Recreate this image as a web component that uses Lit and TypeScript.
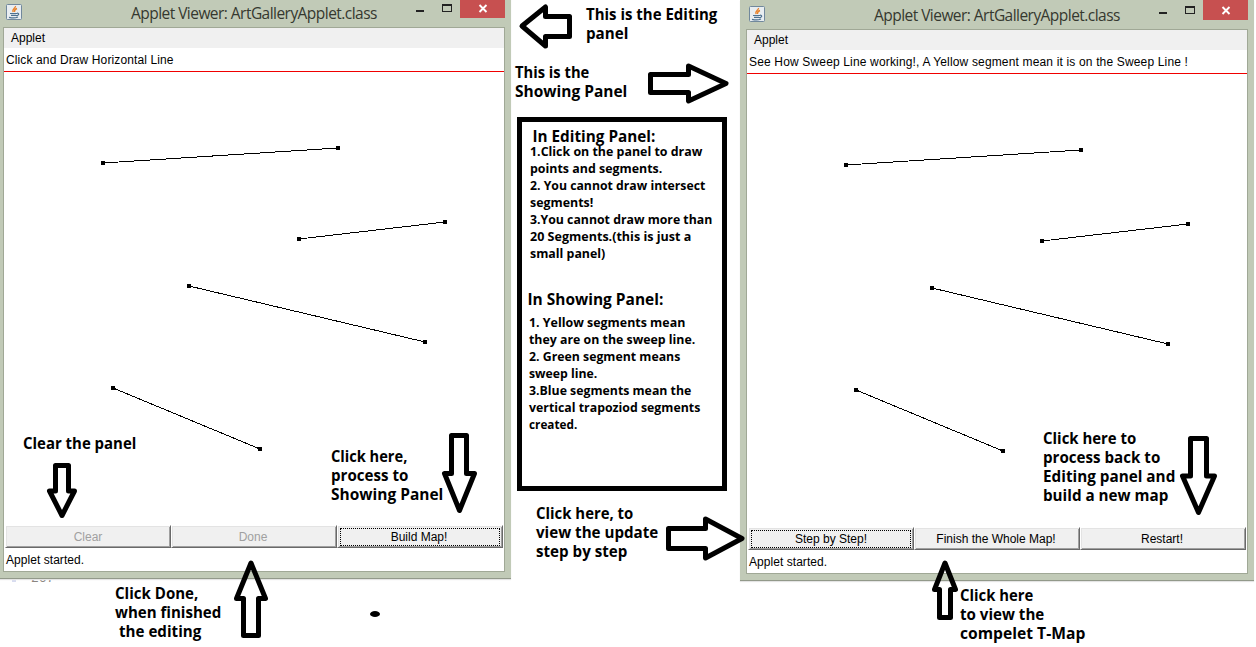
import { LitElement, html, css, svg } from "lit";
import { customElement, property } from "lit/decorators.js";
import { classMap } from "lit/directives/class-map.js";

interface AppletButton {
  label: string;
  disabled?: boolean;
  focused?: boolean;
}

// Segments in drawing-area coordinates: x1, y1, x2, y2
const SEGMENTS = [
  [99, 91, 334, 76],
  [295, 167, 441, 150],
  [185, 214, 421, 270],
  [109, 316, 256, 377],
];

@customElement("applet-window")
export class AppletWindow extends LitElement {
  @property() message = "";
  @property() spacing = "normal";
  @property({ attribute: false }) buttons: AppletButton[] = [];

  static styles = css`
    :host {
      display: flex;
      flex-direction: column;
      box-sizing: border-box;
      width: 514px;
      height: 581px;
      padding: 0 6px 6px;
      background: #c1cab7;
      border-bottom: 1px solid #92998a;
      box-shadow: 0 1px 1px #e4e4e4;
      font: 12px/14px "Liberation Sans", Arial, sans-serif;
      color: #000;
    }
    .titlebar {
      display: grid;
      grid-template-columns: 16px 1fr 45px;
      height: 29px;
      padding: 0 0 0 3px;
    }
    .java { margin-top: 6px; width: 16px; height: 16px; }
    .title {
      padding: 5px 0 0 109px;
      font: 15.5px/21px "Open Sans", "Noto Sans", sans-serif;
      letter-spacing: -0.54px;
      color: #35382f;
      white-space: nowrap;
      display: flex;
      justify-content: space-between;
    }
    .controls { width: 60px; height: 20px; flex: none; margin-top: -5px; }
    .close { width: 45px; height: 20px; background: #c75050; }
    .close svg { display: block; }
    .client {
      flex: 1;
      display: flex;
      flex-direction: column;
      border: 1px solid #a0a896;
      background: #fff;
    }
    .menu { height: 20px; box-sizing: border-box; background: #f0f0f0; padding: 3px 7px; }
    .message {
      height: 24px;
      box-sizing: border-box;
      padding: 5px 2px;
      border-bottom: 1px solid #f00000;
      white-space: nowrap;
    }
    .drawing { flex: 1; display: block; width: 500px; min-height: 0; }
    .buttons { display: grid; grid-template-columns: repeat(3, 166px); padding: 0 1px; }
    .button {
      box-sizing: border-box;
      height: 23px;
      padding: 1px;
      border: 1px solid;
      border-color: #fff #696969 #696969 #fff;
      box-shadow: inset 1px 1px #e3e3e3, inset -1px -1px #a0a0a0;
      background: #f0f0f0;
      display: flex;
    }
    .face {
      flex: 1;
      margin: 1px 1px 0;
      border: 1px solid transparent;
      display: flex;
      align-items: center;
      justify-content: center;
    }
    .button:not(:first-child) .face { padding-right: 2px; }
    .focused .face { border: 1px dotted #000; }
    .disabled { color: #a0a0a0; }
    .status { height: 23px; box-sizing: border-box; padding: 5px 2px; letter-spacing: 0.05px; }
  `;

  render() {
    return html`
      <div class="titlebar">
        <svg class="java" viewBox="0 0 16 16">
          <rect x=".5" y=".5" width="15" height="15" rx="1" fill="#e8edf1" stroke="#71889c" />
          <path d="M9.500 2c.5 2-4 3-2.500 6M11 4.500C8 5.500 8.500 6.500 8.500 8" fill="none" stroke="#e8822b" stroke-width="1.400" />
          <path d="M4 9.500h7M5 11.300h5M11 9.200c3 0 1.500 2.500-1 2.500M3 13.300c3 .8 7 .6 9-.3" fill="none" stroke="#4d7190" stroke-width="1.200" />
        </svg>
        <div class="title">
          <span>Applet Viewer: ArtGalleryApplet.class</span>
          <svg class="controls" viewBox="403 0 60 20">
            <rect x="419" y="12" width="8" height="2" fill="#222" />
            <path d="M445 6h10v8h-10z M446 8v5h8v-5z" fill="#222" fill-rule="evenodd" />
          </svg>
        </div>
        <div class="close">
          <svg width="45" height="20"><path d="M19.500 7l7 7M26.500 7l-7 7" stroke="#fff" stroke-width="1.900" /></svg>
        </div>
      </div>
      <div class="client">
        <div class="menu">Applet</div>
        <div class="message" style="letter-spacing:${this.spacing}">${this.message}</div>
        <svg class="drawing" shape-rendering="crispEdges">
          ${SEGMENTS.map(
            ([x1, y1, x2, y2]) => svg`
              <line x1=${x1} y1=${y1} x2=${x2} y2=${y2} stroke="#000" />
              <rect x=${x1 - 2} y=${y1 - 2} width="4" height="4" />
              <rect x=${x2 - 2} y=${y2 - 2} width="4" height="4" />`
          )}
        </svg>
        <div class="buttons">
          ${this.buttons.map(
            (b) => html`<div class=${classMap({ button: true, disabled: !!b.disabled, focused: !!b.focused })}>
              <div class="face">${b.label}</div>
            </div>`
          )}
        </div>
        <div class="status">Applet started.</div>
      </div>
    `;
  }
}

type Line = [string, number, number, number]; // text, left, right, baseline

const NOTES: Line[] = [
  ["This is the Editing", 586, 717, 20],
  ["panel", 586, 628, 39],
  ["This is the", 515, 589, 78],
  ["Showing Panel", 515, 627, 97],
  ["In Editing Panel:", 532.5, 655, 142],
  ["In Showing Panel:", 527.5, 663, 305],
  ["Clear the panel", 23, 136, 449],
  ["Click here,", 331, 407, 462],
  ["process to", 331, 408, 481],
  ["Showing Panel", 331, 443, 500],
  ["Click Done,", 115, 198, 599],
  ["when finished", 115, 221, 618],
  ["the editing", 119, 201, 637],
  ["Click here, to", 536, 633, 519],
  ["view the update", 536, 658, 538],
  ["step by step", 536, 627, 557],
  ["Click here", 960, 1033, 601],
  ["to view the", 960, 1044, 620],
  ["compelet T-Map", 960, 1085, 639],
  ["Click here to", 1043, 1136, 444],
  ["process back to", 1043, 1160, 463],
  ["Editing panel and", 1043, 1175, 482],
  ["build a new map", 1043, 1168, 501],
];

const RULES: Line[] = [
  ["1.Click on the panel to draw", 530, 702, 156],
  ["points and segments.", 530, 662, 173],
  ["2. You cannot draw intersect", 530, 705, 190],
  ["segments!", 530, 593, 207],
  ["3.You cannot draw more than", 530, 712, 224],
  ["20 Segments.(this is just a", 530, 691, 241],
  ["small panel)", 530, 605, 258],
  ["1. Yellow segments mean", 529, 685, 327],
  ["they are on the sweep line.", 529, 695, 344],
  ["2. Green segment means", 529, 680, 361],
  ["sweep line.", 529, 597, 378],
  ["3.Blue segments mean the", 529, 691, 395],
  ["vertical trapoziod segments", 529, 700, 412],
  ["created.", 529, 577, 429],
];

const ARROWS = [
  "522,26 545.5,7 545.5,16.5 569.5,16.5 569.5,36.5 545.5,36.5 545.5,46",
  "650.5,74.5 688.5,74.5 688.5,66 726,83.5 688.5,101 688.5,92.5 650.5,92.5",
  "55.5,465.5 68.5,465.5 68.5,491 74.5,491 62,515.5 49.5,491 55.5,491",
  "451.5,435.5 466.5,435.5 466.5,473.5 474.5,473.5 459.5,510.5 444.5,473.5 451.5,473.5",
  "251,563 265.5,598.5 258.5,598.5 258.5,635.5 243.5,635.5 243.5,598.5 236.5,598.5",
  "668.5,528.5 705.5,528.5 705.5,519 742,538.5 705.5,558 705.5,548.5 668.5,548.5",
  "945,563 955.5,589.5 950.5,589.5 950.5,617.5 939.5,617.5 939.5,589.5 934.5,589.5",
  "1190.5,438.5 1206.5,438.5 1206.5,476 1214.5,476 1198.5,512.5 1182.5,476 1190.5,476",
];

@customElement("app-root")
export class AppRoot extends LitElement {
  static styles = css`
    :host {
      display: block;
      position: relative;
      width: 1256px;
      height: 647px;
      overflow: hidden;
      background: #fff;
    }
    .window { position: absolute; }
    .editing { left: -3px; top: -2px; }
    .showing { left: 740px; top: 0; }
    .overlay { position: absolute; left: 0; top: 0; }
    .behind {
      position: absolute;
      left: 12px;
      top: 570px;
      height: 12px;
      width: 98px;
      overflow: hidden;
      background: linear-gradient(90deg, #d8dcf0 4px, transparent 4px);
      font: 13px/17px "Liberation Mono", monospace;
      color: #8b8580;
      text-indent: 19px;
    }
    .note { font: bold 15.5px "Open Sans", "Noto Sans", sans-serif; }
    .rule { font: bold 12.3px "Open Sans", "Noto Sans", sans-serif; }
  `;

  private lines(list: Line[], cls: string) {
    return list.map(
      ([text, left, right, y]) => svg`<text class=${cls} x=${left} y=${y}
        textLength=${right - left + 0.3} lengthAdjust="spacingAndGlyphs">${text}</text>`
    );
  }

  render() {
    return html`
      <div class="behind">267</div>
      <applet-window
        class="window editing"
        message="Click and Draw Horizontal Line"
        spacing="0.12px"
        .buttons=${[
          { label: "Clear", disabled: true },
          { label: "Done", disabled: true },
          { label: "Build Map!", focused: true },
        ]}
      ></applet-window>
      <applet-window
        class="window showing"
        message="See How Sweep Line working!, A Yellow segment mean it is on the Sweep Line !"
        spacing="0.16px"
        .buttons=${[
          { label: "Step by Step!", focused: true },
          { label: "Finish the Whole Map!" },
          { label: "Restart!" },
        ]}
      ></applet-window>
      <svg class="overlay" width="1256" height="647" viewBox="0 0 1256 647">
        <rect x="519.5" y="119.5" width="205" height="369" fill="none" stroke="#000" stroke-width="5" />
        ${ARROWS.map(
          (p) => svg`<polygon points=${p} fill="none" stroke="#000" stroke-width="5" stroke-linejoin="round" />`
        )}
        <ellipse cx="375" cy="614" rx="5" ry="3" />
        ${this.lines(NOTES, "note")} ${this.lines(RULES, "rule")}
      </svg>
    `;
  }
}
